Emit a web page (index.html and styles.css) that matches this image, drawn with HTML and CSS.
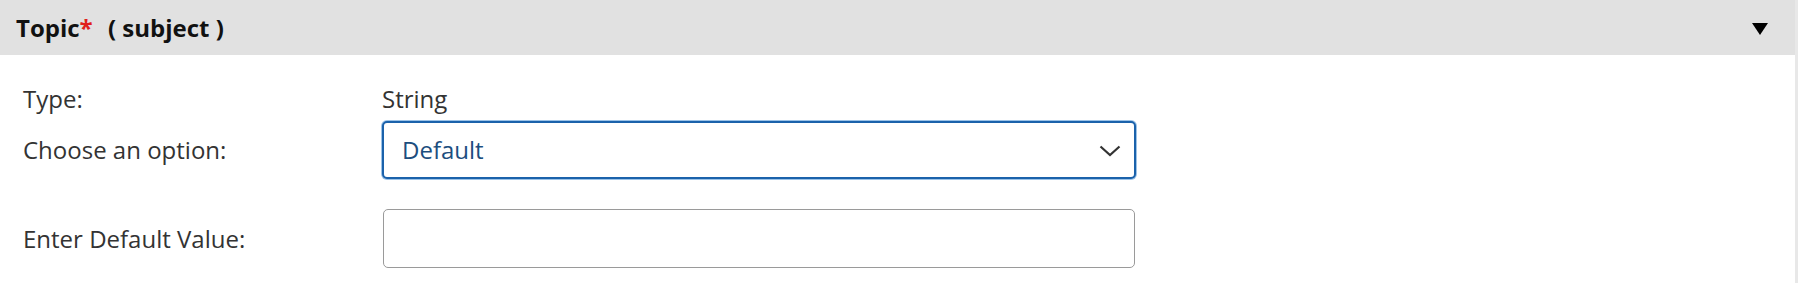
FILE: index.html
```html
<!DOCTYPE html>
<html lang="en">
<head>
  <meta charset="UTF-8">
  <title>Topic</title>
  <link rel="stylesheet" href="styles.css">
</head>
<body>

<div class="panel">
  <div class="panel-header">
    <span class="panel-title">Topic<span class="req">*</span> <span class="sub">( subject )</span></span>
    <svg class="toggle" width="16" height="12" viewBox="0 0 16 12"><path d="M0 0 H16 L8 12 Z" fill="#000"/></svg>
  </div>

  <div class="panel-body">
    <div class="row row-type">
      <label>Type:</label>
      <span class="value">String</span>
    </div>
    <div class="row row-select">
      <label for="option">Choose an option:</label>
      <div class="select-wrap">
        <select id="option" class="field field-select">
          <option>Default</option>
        </select>
        <svg class="chevron" width="22" height="12" viewBox="0 0 22 12"><path d="M1.5 1.5 L11 10 L20.5 1.5" fill="none" stroke="#333" stroke-width="2.2"/></svg>
      </div>
    </div>
    <div class="row row-input">
      <label for="defaultValue">Enter Default Value:</label>
      <input type="text" id="defaultValue" class="field">
    </div>
  </div>
</div>

</body>
</html>
```

FILE: styles.css
```css
/* page */
body {
  margin: 0;
  background: #fff;
  font-family: "Open Sans", "Noto Sans", Arial, sans-serif;
  color: #333;
}
.panel {
  width: 1798px;
  height: 283px;
  border-right: 3px solid #e8e8e8;
  box-sizing: border-box;
}
.panel-header {
  display: flex;
  justify-content: space-between;
  align-items: center;
  height: 55px;
  padding: 0 27px 0 16px;
  background: #e1e1e1;
}
.panel-title {
  font-weight: bold;
  font-size: 24px;
  color: #111;
}
.req {
  color: #e0201b;
}
.sub {
  margin-left: 9px;
}
.toggle {
  margin-top: 3px;
}
.panel-body {
  padding: 28px 0 0 23px;
}
.row {
  display: grid;
  grid-template-columns: 359px 754px;
  align-items: center;
  font-size: 24px;
  line-height: 32px;
}
.row label {
  color: #333;
}
.row-type {
  height: 32px;
}
.row-select {
  margin-top: 6px;
}
.row-input {
  margin-top: 30px;
}
.select-wrap {
  position: relative;
}
.field {
  display: block;
  width: 100%;
  height: 59px;
  box-sizing: border-box;
  border: 1.5px solid #9a9a9a;
  border-radius: 5px;
  font: inherit;
  background: #fff;
  padding: 0 18px;
}
.field-select {
  appearance: none;
  border: 2.5px solid #1b62ab;
  box-shadow: 0 0 0 1px #9cc3e8;
  color: #1c4e7e;
  height: 58px;
}
.row-input .field {
  width: 752px;
  margin-left: 1px;
}
.chevron {
  position: absolute;
  right: 15px;
  top: 24px;
}
```
